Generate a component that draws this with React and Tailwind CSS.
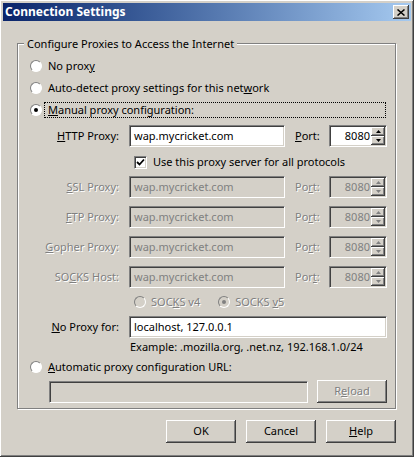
const sunk = 'border border-t-[#808080] border-l-[#808080] border-b-white border-r-white shadow-[inset_1px_1px_0_#404040,inset_-1px_-1px_0_#d4d0c8]';
const raised = 'shadow-[inset_-1px_-1px_0_#404040,inset_1px_1px_0_#fff,inset_-2px_-2px_0_#808080,inset_2px_2px_0_#d4d0c8]';
const dis = 'text-[#808080] [text-shadow:1px_1px_0_#fff]';

const Radio = ({ checked, disabled }) => (
  <div className={`w-[12px] h-[12px] rounded-full flex items-center justify-center shrink-0 border border-t-[#808080] border-l-[#808080] border-b-white border-r-white ${disabled ? 'bg-[#d4d0c8]' : 'bg-white'}`}>
    {checked && <div className={`w-[4px] h-[4px] rounded-full ${disabled ? 'bg-[#808080]' : 'bg-black'}`} />}
  </div>
);

const Spin = ({ disabled }) => (
  <div className={`w-[58px] h-[22px] flex items-center ${sunk} ${disabled ? 'bg-[#d4d0c8] text-[#808080]' : 'bg-white'}`}>
    <span className="flex-1 text-right pr-[1px]">8080</span>
    <div className="flex flex-col w-[14px] h-[18px] mr-[1px]">
      {[0, 1].map((i) => (
        <div key={i} className={`flex-1 bg-[#d4d0c8] flex items-center justify-center ${raised}`}>
          <svg width="5" height="3" viewBox="0 0 5 3"><path d={i ? 'M0 0h5L2.5 3z' : 'M0 3h5L2.5 0z'} fill={disabled ? '#808080' : '#000'} /></svg>
        </div>
      ))}
    </div>
  </div>
);

const ProxyRow = ({ u, rest, pre = '', portU, disabled, mt }) => (
  <div className={`flex items-center h-[22px] ${mt}`}>
    <div className={`w-[101px] text-right ${disabled ? dis : ''}`}>{pre}<u>{u}</u>{rest}</div>
    <div className={`ml-[10px] w-[156px] h-[22px] px-[4px] flex items-center ${sunk} ${disabled ? 'bg-[#d4d0c8] text-[#808080]' : 'bg-white'}`}>wap.mycricket.com</div>
    <div className={`ml-[10px] w-[34px] ${disabled ? dis : ''}`}>{portU}</div>
    <Spin disabled={disabled} />
  </div>
);

const Btn = ({ children, disabled, w = 'w-[70px]' }) => (
  <div className={`${w} h-[23px] flex items-center justify-center bg-[#d4d0c8] ${raised} ${disabled ? dis : ''}`}>{children}</div>
);

export default function App() {
  return (
    <div className={`w-[414px] h-[457px] bg-[#d4d0c8] p-[3px] text-[11px] text-black ${raised} font-['Liberation_Sans',sans-serif]`}>
      <div className="h-[18px] bg-gradient-to-r from-[#0a246a] to-[#a6caf0] flex items-center justify-between pl-[2px] pr-[2px]">
        <span className="text-white font-bold text-[12px]">Connection Settings</span>
        <div className={`w-[16px] h-[14px] bg-[#d4d0c8] flex items-center justify-center ${raised}`}>
          <svg width="8" height="7" viewBox="0 0 8 7"><path d="M0.5 0.5l7 6M7.5 0.5l-7 6" stroke="#000" strokeWidth="1.5" /></svg>
        </div>
      </div>
      <div className="relative ml-[14px] mt-[22px] w-[379px] h-[366px] border border-[#808080] shadow-[inset_1px_1px_0_#fff,1px_1px_0_#fff] pt-[11px]">
        <span className="absolute -top-[8px] left-[6px] px-[3px] bg-[#d4d0c8]">Configure Proxies to Access the Internet</span>
        <div className="flex items-center h-[22px] pl-[12px] gap-[6px]"><Radio /><span>No prox<u>y</u></span></div>
        <div className="flex items-center h-[22px] pl-[12px] gap-[6px]"><Radio /><span>Auto-detect proxy settings for this net<u>w</u>ork</span></div>
        <div className="flex items-center h-[22px] pl-[12px] gap-[2px]"><Radio checked /><div className="flex-1 mr-[9px] h-[16px] border border-dotted border-black flex items-center pl-[3px]"><span><u>M</u>anual proxy configuration:</span></div></div>
        <ProxyRow u="H" rest="TTP Proxy:" portU={<><u>P</u>ort:</>} mt="mt-[4px]" />
        <div className="flex items-center h-[22px] mt-[4px] pl-[116px] gap-[6px]">
          <div className={`w-[13px] h-[13px] bg-white flex items-center justify-center ${sunk}`}>
            <svg width="9" height="9" viewBox="0 0 9 9"><path d="M1 4l2.5 2.5L8 1.5" stroke="#000" strokeWidth="1.8" fill="none" /></svg>
          </div>
          <span>Use this proxy server for all protocols</span>
        </div>
        <ProxyRow u="S" rest="SL Proxy:" portU={<>Po<u>r</u>t:</>} disabled mt="mt-[3px]" />
        <ProxyRow u="F" rest="TP Proxy:" portU={<>Po<u>r</u>t:</>} disabled mt="mt-[8px]" />
        <ProxyRow u="G" rest="opher Proxy:" portU={<>Po<u>r</u>t:</>} disabled mt="mt-[8px]" />
        <ProxyRow pre="SO" u="C" rest="KS Host:" portU={<>Por<u>t</u>:</>} disabled mt="mt-[8px]" />
        <div className={`flex items-center h-[22px] mt-[3px] pl-[116px] ${dis}`}>
          <Radio disabled /><span className="ml-[5px]">SOC<u>K</u>S v4</span>
          <span className="ml-[18px]"><Radio checked disabled /></span><span className="ml-[5px]">SOCKS <u>v</u>5</span>
        </div>
        <div className="flex items-center h-[22px] mt-[3px]">
          <div className="w-[101px] text-right"><u>N</u>o Proxy for:</div>
          <div className={`ml-[10px] w-[258px] h-[22px] px-[4px] flex items-center bg-white ${sunk}`}>localhost, 127.0.0.1</div>
        </div>
        <div className="h-[19px] flex items-center pl-[112px]">Example: .mozilla.org, .net.nz, 192.168.1.0/24</div>
        <div className="flex items-center h-[20px] pl-[12px] gap-[6px]"><Radio /><span><u>A</u>utomatic proxy configuration URL:</span></div>
        <div className="flex items-center mt-[3px] pl-[31px]">
          <div className={`w-[259px] h-[22px] bg-[#d4d0c8] ${sunk}`} />
          <div className="ml-[9px]"><Btn disabled><span>R<u>e</u>load</span></Btn></div>
        </div>
      </div>
      <div className="flex justify-end gap-[10px] mt-[11px] pr-[15px]">
        <Btn>OK</Btn>
        <Btn>Cancel</Btn>
        <Btn><span><u>H</u>elp</span></Btn>
      </div>
    </div>
  );
}
